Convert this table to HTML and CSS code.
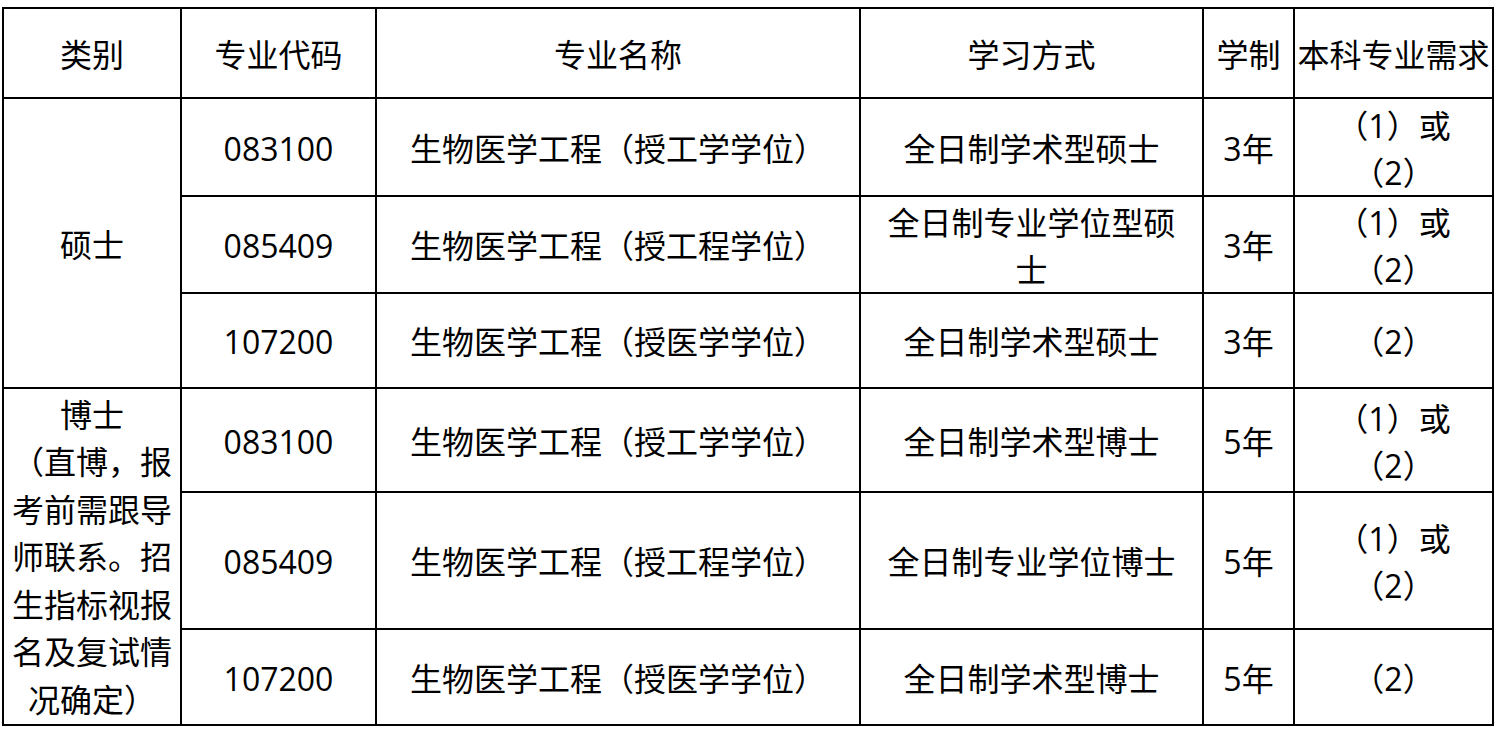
FILE: index.html
```html
<!DOCTYPE html>
<html lang="zh-CN">
<head>
<meta charset="utf-8">
<title>专业目录</title>
<link rel="stylesheet" href="styles.css">
</head>
<body>
<div class="grid">
  <div class="cell">类别</div>
  <div class="cell">专业代码</div>
  <div class="cell">专业名称</div>
  <div class="cell">学习方式</div>
  <div class="cell">学制</div>
  <div class="cell">本科专业需求</div>

  <div class="cell r2">硕士</div>
  <div class="cell">083100</div>
  <div class="cell">生物医学工程（授工学学位）</div>
  <div class="cell">全日制学术型硕士</div>
  <div class="cell">3年</div>
  <div class="cell multi">（1）或<br>（2）</div>

  <div class="cell">085409</div>
  <div class="cell">生物医学工程（授工程学位）</div>
  <div class="cell multi">全日制专业学位型硕<br>士</div>
  <div class="cell">3年</div>
  <div class="cell multi">（1）或<br>（2）</div>

  <div class="cell">107200</div>
  <div class="cell">生物医学工程（授医学学位）</div>
  <div class="cell">全日制学术型硕士</div>
  <div class="cell">3年</div>
  <div class="cell">（2）</div>

  <div class="cell r5 phd">博士<br>（直博，报<br>考前需跟导<br>师联系。招<br>生指标视报<br>名及复试情<br>况确定）</div>
  <div class="cell">083100</div>
  <div class="cell">生物医学工程（授工学学位）</div>
  <div class="cell">全日制学术型博士</div>
  <div class="cell">5年</div>
  <div class="cell multi">（1）或<br>（2）</div>

  <div class="cell">085409</div>
  <div class="cell">生物医学工程（授工程学位）</div>
  <div class="cell">全日制专业学位博士</div>
  <div class="cell">5年</div>
  <div class="cell multi">（1）或<br>（2）</div>

  <div class="cell">107200</div>
  <div class="cell">生物医学工程（授医学学位）</div>
  <div class="cell">全日制学术型博士</div>
  <div class="cell">5年</div>
  <div class="cell">（2）</div>
</div>
</body>
</html>
```
FILE: styles.css
```css
html, body {
  background: #ffffff;
}
body {
  margin: 7px 0 0 2px;
  font-family: "Open Sans", "Noto Sans CJK SC", sans-serif;
  font-size: 32px;
  color: #000000;
}
.grid {
  display: grid;
  width: max-content;
  grid-template-columns: 176px 193px 482px 341px 89px 197px;
  grid-template-rows: 88px 96px 95px 93px 102px 135px 94px;
  gap: 2px;
  padding: 2px;
  background: #000000;
}
.cell {
  background: #ffffff;
  display: flex;
  align-items: center;
  justify-content: center;
  text-align: center;
  white-space: nowrap;
  line-height: 48px;
  padding-top: 3px;
}
.multi {
  line-height: 47px;
}
.r2 {
  grid-column: 1;
  grid-row: 2 / span 3;
}
.r5 {
  grid-column: 1;
  grid-row: 5 / span 3;
}
.phd {
  line-height: 47.5px;
  padding-top: 1px;
}
```
